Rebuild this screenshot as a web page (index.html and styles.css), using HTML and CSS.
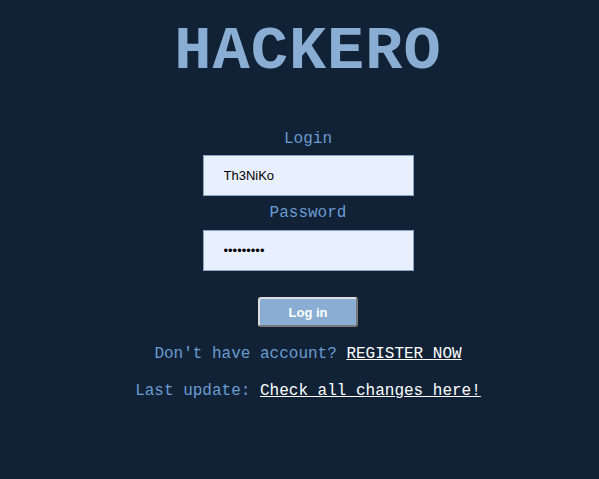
FILE: index.html
```html
<!DOCTYPE html>
<html>
<head>
<meta charset="utf-8">
<link rel="stylesheet" href="styles.css">
</head>
<body>
<div class="page">
  <h1 class="title">HACKERO</h1>
  <form class="login-form">
    <label class="label label-login">Login</label>
    <input class="field" type="text" value="Th3NiKo">
    <label class="label label-pass">Password</label>
    <input class="field" type="password" value="123456789">
    <button class="btn" type="button">Log in</button>
  </form>
  <p class="line line-first">Don't have account? <a class="link" href="#">REGISTER NOW</a></p>
  <p class="line line-second">Last update: <a class="link" href="#">Check all changes here!</a></p>
</div>
</body>
</html>
```
FILE: styles.css
```css
html, body {
  margin: 0;
  padding: 0;
  background: #112236;
}
body {
  font-family: "Courier New", "Nimbus Mono PS", "Nimbus Mono L", FreeMono, Courier, "Liberation Mono", monospace;
  width: 599px;
  height: 479px;
  overflow: hidden;
}
.page {
  padding-left: 17px;
  display: flex;
  flex-direction: column;
  align-items: center;
}
.title {
  margin: 21px 0 0 0;
  font-size: 62px;
  line-height: 62px;
  letter-spacing: 1px;
  font-weight: bold;
  color: #8aadd3;
}
.login-form {
  display: flex;
  flex-direction: column;
  align-items: center;
  margin-top: 46px;
}
.label {
  font-size: 16px;
  line-height: 20px;
  color: #6a9bd1;
  margin-bottom: 6px;
}
.label-pass {
  margin-top: 7px;
  margin-bottom: 7px;
}
.field {
  box-sizing: border-box;
  width: 211px;
  height: 41px;
  border: 1px solid #8aa6c4;
  background: #e8f0fe;
  padding: 0 0 0 20px;
  font-family: "Liberation Sans", Arial, sans-serif;
  font-size: 13px;
  color: #000;
  outline: none;
}
.btn {
  margin-top: 26px;
  box-sizing: border-box;
  width: 100px;
  height: 30px;
  background: #8aadd3;
  border: 2px solid;
  border-color: #dcdcdc #7a7a7a #7a7a7a #dcdcdc;
  border-radius: 3px;
  color: #fff;
  font-family: "Liberation Sans", Arial, sans-serif;
  font-weight: bold;
  font-size: 13px;
  padding: 0;
}
.line {
  margin: 17px 0 0 0;
  font-size: 16px;
  line-height: 20px;
  color: #6a9bd1;
  white-space: pre;
}
.line-first {
  margin-top: 17px;
}
.link {
  color: #fff;
  text-decoration: underline;
}
```
